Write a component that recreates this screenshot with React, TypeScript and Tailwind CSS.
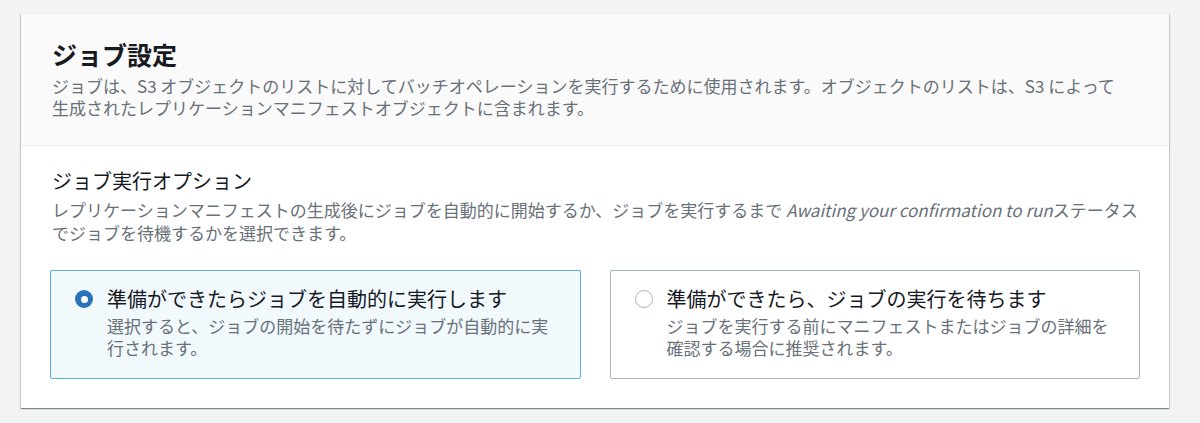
import { useState } from "react";

type Option = {
  id: string;
  title: string;
  desc: string;
};

const options: Option[] = [
  {
    id: "auto",
    title: "準備ができたらジョブを自動的に実行します",
    desc: "選択すると、ジョブの開始を待たずにジョブが自動的に実行されます。",
  },
  {
    id: "wait",
    title: "準備ができたら、ジョブの実行を待ちます",
    desc: "ジョブを実行する前にマニフェストまたはジョブの詳細を確認する場合に推奨されます。",
  },
];

function Radio({ checked }: { checked: boolean }) {
  return checked ? (
    <span className="mt-[5px] flex h-[18px] w-[18px] shrink-0 items-center justify-center rounded-full bg-[#2a72b9]">
      <span className="h-[7px] w-[7px] rounded-full bg-white" />
    </span>
  ) : (
    <span className="mt-[5px] h-[18px] w-[18px] shrink-0 rounded-full border-[1.5px] border-[#aab7b8] bg-white" />
  );
}

function App() {
  const [selected, setSelected] = useState<string>("auto");

  return (
    <div
      className="min-h-[423px] bg-[#f2f3f3] pt-[13px] text-[#16191f]"
      style={{ fontFamily: '"Noto Sans CJK JP", "Noto Sans", sans-serif' }}
    >
      <div className="ml-[21px] w-[1148px] border-t border-[#eaeded] bg-white shadow-[0_1px_1px_0_rgba(0,28,36,0.3),1px_1px_1px_0_rgba(0,28,36,0.15),-1px_1px_1px_0_rgba(0,28,36,0.15)]">
        {/* header */}
        <div className="border-b border-[#eaeded] bg-[#fafafa] px-[31px] pt-[24px] pb-[26px]">
          <h2 className="text-[25px] leading-[32px] font-bold">ジョブ設定</h2>
          <p className="mt-[5px] max-w-[1066px] text-[17px] leading-[22px] text-[#687078]">
            ジョブは、S3 オブジェクトのリストに対してバッチオペレーションを実行するために使用されます。オブジェクトのリストは、S3 によって生成されたレプリケーションマニフェストオブジェクトに含まれます。
          </p>
        </div>

        {/* body */}
        <div className="px-[29px] pt-[22px] pb-[29px]">
          <div className="px-[2px]">
            <div className="text-[20px] leading-[26px]">ジョブ実行オプション</div>
            <p className="mt-[4px] text-[17px] leading-[23px] text-[#687078]">
              レプリケーションマニフェストの生成後にジョブを自動的に開始するか、ジョブを実行するまで{" "}
              <i>Awaiting your confirmation to run</i>ステータス
              <br />
              でジョブを待機するかを選択できます。
            </p>
          </div>

          <div className="mt-[26px] grid grid-cols-2 gap-[29px]">
            {options.map((opt) => {
              const on = selected === opt.id;
              return (
                <button
                  key={opt.id}
                  onClick={() => setSelected(opt.id)}
                  className={
                    on
                      ? "flex h-[109px] gap-[14px] rounded-[2px] border border-[#5aaedb] bg-[#f1f9fd] px-[24px] pt-[14px] text-left"
                      : "flex h-[109px] gap-[14px] rounded-[2px] border border-[#aab7b8] bg-white px-[24px] pt-[14px] text-left"
                  }
                >
                  <Radio checked={on} />
                  <div>
                    <div className="text-[20px] leading-[27px]">{opt.title}</div>
                    <div className="mt-[3px] text-[17px] leading-[22px] text-[#687078]">{opt.desc}</div>
                  </div>
                </button>
              );
            })}
          </div>
        </div>
      </div>
    </div>
  );
}

export default App;
